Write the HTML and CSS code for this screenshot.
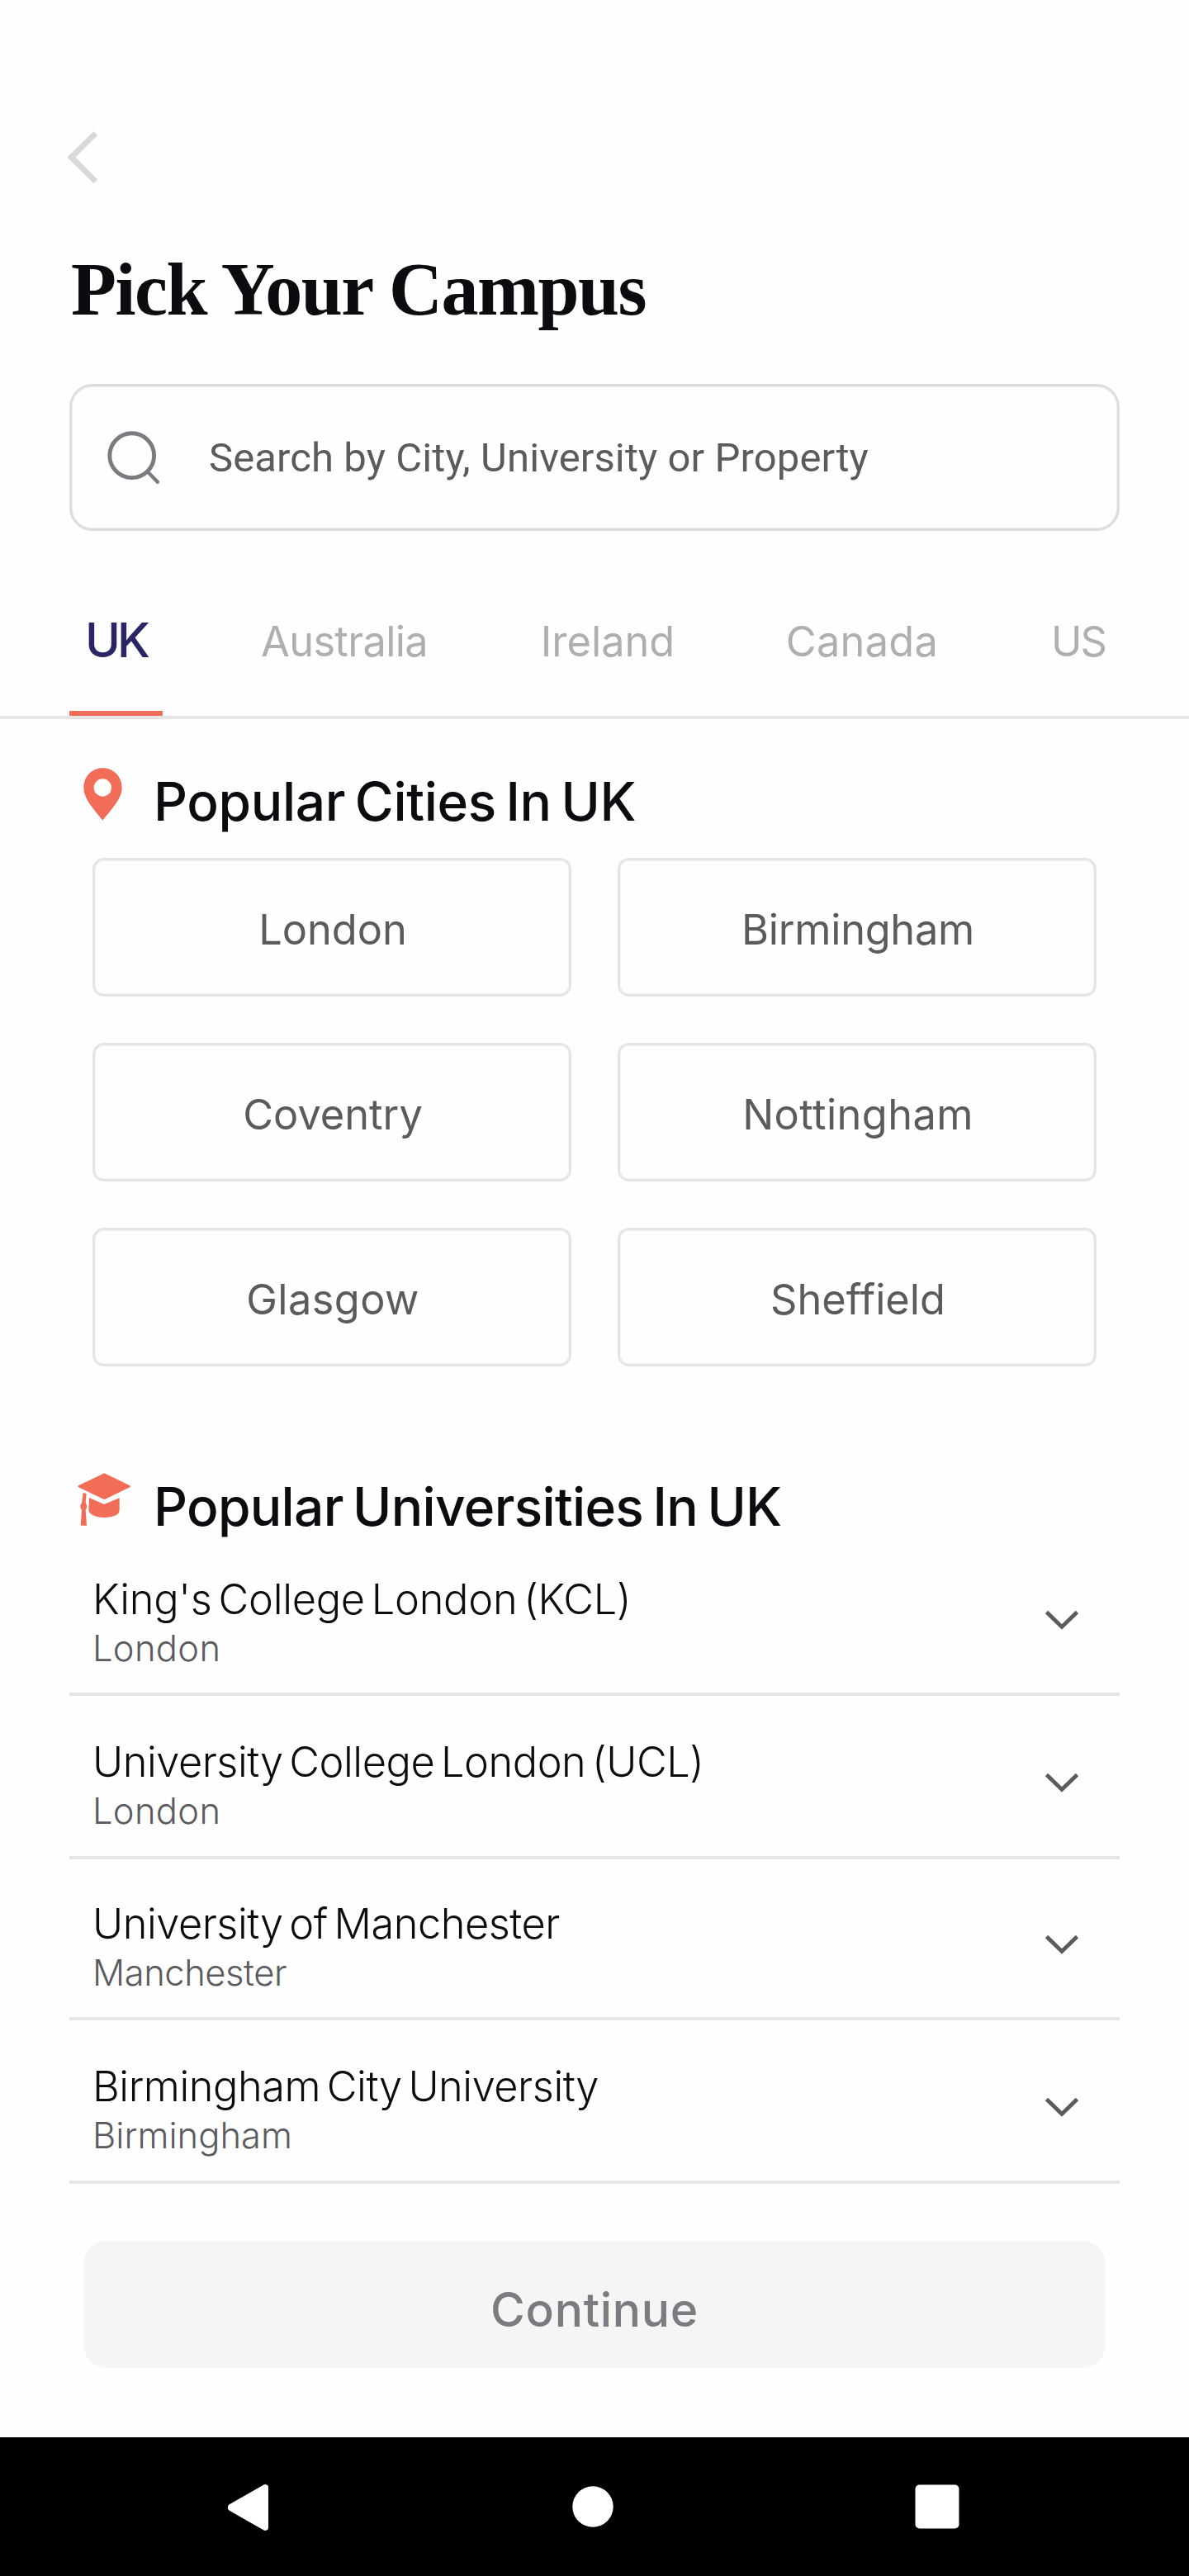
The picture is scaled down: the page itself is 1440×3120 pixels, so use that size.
FILE: index.html
```html
<!DOCTYPE html>
<html lang="en">
<head>
<meta charset="utf-8">
<title>Pick Your Campus</title>
<link rel="stylesheet" href="styles.css">
</head>
<body>
<div class="screen">
  <header class="header">
    <button class="back" aria-label="Back">
      <svg width="40" height="66" viewBox="0 0 40 66"><path d="M1.4 32.6 33.5 1l4.8 4.8-26.8 26.8 26.8 26.8-4.8 4.8z" fill="#d9d9d9"/></svg>
    </button>
    <h1 class="title">Pick Your Campus</h1>
    <div class="search">
      <svg class="search-icon" width="90" height="90" viewBox="0 0 90 90" fill="none" stroke="#7b7b82"><circle cx="39.7" cy="41.7" r="26.9" stroke-width="4.9"/><path d="m58.7 61.3 12.1 12.5" stroke-width="4.4" stroke-linecap="round"/></svg>
      <span class="search-text">Search by City, University or Property</span>
    </div>
  </header>

  <nav class="tabs">
    <a class="tab tab-active">UK</a>
    <a class="tab tab-au">Australia</a>
    <a class="tab">Ireland</a>
    <a class="tab tab-ca">Canada</a>
    <a class="tab tab-us">US</a>
  </nav>

  <section class="section">
    <div class="section-head">
      <svg width="80" height="80" viewBox="0 0 240 240"><path fill="#f26d58" fill-rule="evenodd" d="M115 25C76 25 46 56 46 96c0 42 36 76 69 119 33-43 70-77 70-119 0-40-31-71-70-71zm0 39a32 32 0 1 1 0 64 32 32 0 0 1 0-64z"/></svg>
      <h2 class="section-title">Popular Cities In UK</h2>
    </div>
    <div class="cities">
      <div class="city">London</div>
      <div class="city city-tight">Birmingham</div>
      <div class="city">Coventry</div>
      <div class="city city-wide">Nottingham</div>
      <div class="city city-wide">Glasgow</div>
      <div class="city">Sheffield</div>
    </div>
  </section>

  <section class="section section-universities">
    <div class="section-head">
      <svg width="80" height="80" viewBox="0 0 240 240" fill="#f26d58"><path d="m121 25 93 45q4 3 0 6l-93 45-94-45q-4-3 0-6z"/><path d="m66 114 54 24 56-23v43q0 18-26 24-30 8-58 0-28-8-28-24z"/><path d="m44 96 12 3-3 34q9 14 0 26l4 56H35l4-56q-10-12 0-26z"/></svg>
      <h2 class="section-title section-title-tight">Popular Universities In UK</h2>
    </div>
    <ul class="list">
      <li class="row">
        <div><div class="name">King's College London (KCL)</div><div class="place">London</div></div>
        <svg class="chevron" width="42" height="24" viewBox="0 0 42 24"><path d="M2.5 2.5 21 20.5 39.5 2.5"/></svg>
      </li>
      <li class="row">
        <div><div class="name">University College London (UCL)</div><div class="place">London</div></div>
        <svg class="chevron" width="42" height="24" viewBox="0 0 42 24"><path d="M2.5 2.5 21 20.5 39.5 2.5"/></svg>
      </li>
      <li class="row">
        <div><div class="name">University of Manchester</div><div class="place">Manchester</div></div>
        <svg class="chevron" width="42" height="24" viewBox="0 0 42 24"><path d="M2.5 2.5 21 20.5 39.5 2.5"/></svg>
      </li>
      <li class="row">
        <div><div class="name">Birmingham City University</div><div class="place">Birmingham</div></div>
        <svg class="chevron" width="42" height="24" viewBox="0 0 42 24"><path d="M2.5 2.5 21 20.5 39.5 2.5"/></svg>
      </li>
    </ul>
  </section>

  <button class="continue">Continue</button>

  <footer class="system-nav">
    <svg width="80" height="80" viewBox="0 0 240 240" fill="#fff"><path d="m51 113 126-72q9-5 17 3 1 2 1 6v146q0 4-1 6-8 8-17 3L51 133q-7-10 0-20z"/></svg>
    <svg width="80" height="80" viewBox="0 0 80 80" fill="#fff"><circle cx="40" cy="40" r="24.7"/></svg>
    <svg width="80" height="80" viewBox="0 0 80 80" fill="#fff"><rect x="13.5" y="13.5" width="53" height="53" rx="5"/></svg>
  </footer>
</div>
</body>
</html>
```
FILE: styles.css
```css
* { box-sizing: border-box; }
body, h1, h2, ul { margin: 0; padding: 0; }
body { background: #fefefe; font-family: Inter, "Liberation Sans", sans-serif; }
svg { display: block; flex: none; }
button { border: 0; background: none; padding: 0; font-family: inherit; }

.screen { width: 1440px; height: 3120px; display: flex; flex-direction: column; overflow: hidden; }

.header { padding: 158px 84px 0 80px; }
.back { display: block; height: 66px; }
.title { margin: 77px 0 64px 6px; font: bold 90px/100px "Liberation Serif", serif; letter-spacing: -1.5px; color: #0c0b10; white-space: nowrap; }
.search { height: 178px; margin-left: 4px; border: 3px solid #dcdcdc; box-shadow: inset 0 0 0 1px #efefef; border-radius: 28px; display: flex; align-items: center; padding-left: 33px; gap: 43px; }
.search-icon { margin-top: 2px; }
.search-text { font: 49px/60px Roboto, sans-serif; letter-spacing: .1px; color: #5b5b5f; padding-top: 1px; }

.tabs { height: 228px; padding: 102px 0 0 84px; display: grid; grid-template-columns: 113px 440px 198px 418px 106px; border-bottom: 4px solid #e5e5e5; }
.tab { padding-top: 2px; text-align: center; font-size: 50.5px; line-height: 60px; color: #afafb3; }
.tab-active { padding-top: 0; font-size: 58px; font-weight: 500; letter-spacing: -4px; color: #2a2665; border-bottom: 6px solid #f26d58; }
.tab-au { letter-spacing: -.7px; }
.tab-ca { letter-spacing: .3px; }
.tab-us { letter-spacing: -2px; }

.section { padding: 51px 84px 0; }
.section-head { display: flex; gap: 20px; padding-left: 2px; }
.section-title { margin-top: 9px; font-size: 64px; line-height: 80px; font-weight: 500; letter-spacing: -.35px; word-spacing: -5px; color: #0c0b10; }
.section-title-tight { letter-spacing: -.7px; }
.cities { margin: 28px 28px 0; display: grid; grid-template-columns: 580px 580px; grid-auto-rows: 168px; gap: 56px; }
.city { border: 3px solid #e5e5e5; box-shadow: inset 0 0 0 1px #f4f4f4; border-radius: 14px; display: flex; align-items: center; justify-content: center; padding-top: 5px; padding-left: 2px; font-size: 50.5px; color: #5b5b5f; }
.city-tight { letter-spacing: -.3px; }
.city-wide { letter-spacing: .4px; }

.section-universities { padding-top: 121px; }
.list { list-style: none; }
.row { height: 198px; padding: 0 49px 30px 28px; border-bottom: 4px solid #e5e5e5; display: flex; align-items: flex-end; justify-content: space-between; }
.row:nth-child(1) { height: 189px; padding-bottom: 29px; }
.row:nth-child(3) { height: 195px; padding-bottom: 29px; }
.name { font-size: 50.5px; line-height: 60px; font-weight: 300; letter-spacing: -.47px; word-spacing: -6px; color: #0c0b10; }
.row:nth-child(1) .name { letter-spacing: -.27px; }
.place { margin-top: 4px; font-size: 43.5px; line-height: 50px; font-weight: 300; color: #5b5b5f; }
.row:nth-child(-n+2) .place { letter-spacing: .3px; }
.row:nth-child(3) .place { letter-spacing: -.45px; }
.chevron { margin-bottom: 47px; fill: none; stroke: #5b5b5f; stroke-width: 4.8; }

.continue { margin: 69px 101px 0; height: 154px; padding-top: 12px; border-radius: 28px; background: #f5f5f5; font-size: 57px; font-weight: 500; letter-spacing: .7px; color: #7b7b82; }
.system-nav { margin-top: auto; height: 168px; padding: 0 265px 0 260px; background: #000; display: flex; align-items: center; justify-content: space-between; }
```
